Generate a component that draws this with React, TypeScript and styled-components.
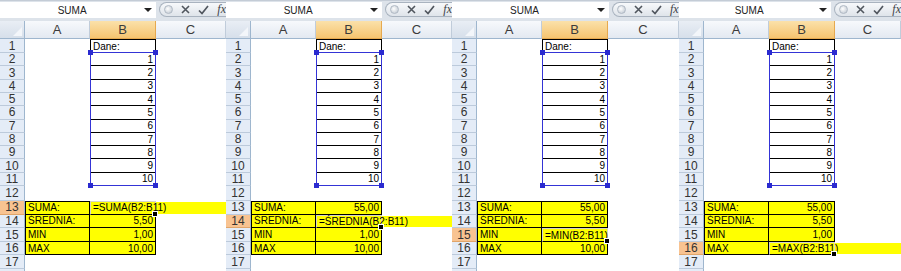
import React from "react";
import styled, { createGlobalStyle, css } from "styled-components";

const GlobalStyle = createGlobalStyle`
  html, body { margin: 0; padding: 0; background: #ffffff; }
  body { font-family: "Liberation Sans", Arial, sans-serif; }
`;

const Strip = styled.div`
  display: flex;
  width: 901px;
  height: 271px;
  overflow: hidden;
`;

const Panel = styled.div<{ $w: number }>`
  flex: 0 0 ${(p) => p.$w}px;
  display: flex;
  flex-direction: column;
  overflow: hidden;
  background: #fff;
`;

const TopBar = styled.div`
  height: 22px;
  box-sizing: border-box;
  display: flex;
  align-items: flex-start;
  padding-top: 1px;
  background: #dde3ea;
  border-top: 1px solid #c4ccd6;
`;

const NameBox = styled.div`
  width: 157px;
  height: 16px;
  background: #fff;
  display: flex;
  align-items: center;
  font-size: 10px;
  color: #222;
`;

const NameText = styled.span`
  flex: 1;
  text-align: center;
`;

const DropArrow = styled.span`
  width: 0;
  height: 0;
  margin-right: 4px;
  border-left: 4px solid transparent;
  border-right: 4px solid transparent;
  border-top: 4px solid #222;
`;

const FxPill = styled.div`
  flex: 1;
  margin-left: 3px;
  height: 15px;
  box-sizing: border-box;
  display: flex;
  align-items: center;
  gap: 8px;
  padding-left: 4px;
  border: 1px solid #a9b3bf;
  border-right: none;
  border-radius: 8px 0 0 8px;
  background: linear-gradient(#f7f9fb, #dfe4ea);
  color: #4a4f56;
`;

const Knob = styled.span`
  width: 7px;
  height: 7px;
  border-radius: 50%;
  background: radial-gradient(circle at 40% 40%, #ffffff, #b9c2cc);
  border: 1px solid #b0b9c4;
`;

const FxGlyph = styled.span`
  font-family: "Liberation Serif", serif;
  font-style: italic;
  font-size: 12px;
  color: #3d4248;
`;

const Sheet = styled.div`
  display: grid;
  grid-template-columns: 25px 65px 66px 1fr;
  grid-template-rows: 18px 14px repeat(10, 13.3px) 15px repeat(6, 13.6px);
  overflow: hidden;
`;

const Corner = styled.div`
  grid-row: 1;
  grid-column: 1;
  background: linear-gradient(#e9eef5, #d6dfea);
  border-right: 1px solid #9eb6ce;
  border-bottom: 1px solid #9eb6ce;
  display: flex;
  align-items: flex-end;
  justify-content: flex-end;
  padding: 0 2px 2px 0;
`;

const CornerTri = styled.span`
  width: 0;
  height: 0;
  border-left: 9px solid transparent;
  border-bottom: 9px solid #f3f6fa;
`;

const ColHead = styled.div<{ $col: number; $on?: boolean }>`
  grid-row: 1;
  grid-column: ${(p) => p.$col};
  display: flex;
  align-items: center;
  justify-content: center;
  font-size: 13px;
  color: #3b3b3b;
  border-right: 1px solid #c0ccda;
  border-bottom: 1px solid #9eb6ce;
  background: linear-gradient(#f7f9fc, #e3e9f1);
  ${(p) =>
    p.$on &&
    css`
      background: linear-gradient(#fbe1aa, #f5c470);
      border-right-color: #e6a94f;
      border-bottom-color: #e6a94f;
    `}
`;

const RowHead = styled.div<{ $row: number; $on?: boolean }>`
  grid-row: ${(p) => p.$row + 1};
  grid-column: 1;
  display: flex;
  align-items: center;
  justify-content: center;
  font-size: 12px;
  line-height: 12px;
  color: #333;
  background: #e4ecf7;
  border-right: 1px solid #9eb6ce;
  border-bottom: 1px solid #bccadb;
  ${(p) =>
    p.$on &&
    css`
      background: #f8c391;
      border-bottom-color: #e0a56a;
    `}
`;

const Cell = styled.div<{
  $row: number;
  $col: number;
  $fill?: string;
  $right?: boolean;
  $top?: boolean;
  $left?: boolean;
  $boxed?: boolean;
}>`
  grid-row: ${(p) => p.$row + 1};
  grid-column: ${(p) => p.$col};
  display: flex;
  align-items: center;
  justify-content: ${(p) => (p.$right ? "flex-end" : "flex-start")};
  padding: 0 2px;
  font-size: 10px;
  line-height: 11px;
  color: #000;
  white-space: nowrap;
  background: ${(p) => p.$fill || "transparent"};
  ${(p) =>
    p.$boxed &&
    css`
      border-right: 1px solid #000;
      border-bottom: 1px solid #000;
    `}
  ${(p) => p.$top && "border-top: 1px solid #000;"}
  ${(p) => p.$left && "border-left: 1px solid #000;"}
`;

const EditCell = styled.div<{ $row: number }>`
  grid-row: ${(p) => p.$row + 1};
  grid-column: 3;
  position: relative;
  z-index: 2;
  display: flex;
  align-items: center;
  padding: 0 2px;
  font-size: 10px;
  line-height: 11px;
  color: #000;
  white-space: nowrap;
  overflow: visible;
  background: #ffff00;
  border: 1px solid #d6d6c8;
  border-bottom-color: #000;
`;

const Spill = styled.div<{ $row: number }>`
  grid-row: ${(p) => p.$row + 1};
  grid-column: 4;
  background: #ffff00;
  margin-top: 1px;
  margin-bottom: 1px;
`;

const FillHandle = styled.span`
  position: absolute;
  right: -3px;
  bottom: -3px;
  width: 4px;
  height: 4px;
  background: #000;
  border: 1px solid #fff;
`;

const Selection = styled.div`
  grid-row: 3 / 13;
  grid-column: 3;
  position: relative;
  z-index: 3;
  margin: -1px 0 0 0;
  border: 1px solid #3434d6;
  pointer-events: none;
`;

const Grip = styled.span<{ $x: "l" | "r"; $y: "t" | "b" }>`
  position: absolute;
  width: 5px;
  height: 5px;
  background: #2a2ad0;
  ${(p) => (p.$x === "l" ? "left: -3px;" : "right: -3px;")}
  ${(p) => (p.$y === "t" ? "top: -3px;" : "bottom: -3px;")}
`;

const XIcon = () => (
  <svg width="9" height="9" viewBox="0 0 9 9">
    <path d="M1 1 L8 8 M8 1 L1 8" stroke="#50565e" strokeWidth="1.6" />
  </svg>
);

const CheckIcon = () => (
  <svg width="11" height="10" viewBox="0 0 11 10">
    <path d="M1 5.5 L4 8.5 L10 1" stroke="#50565e" strokeWidth="1.7" fill="none" />
  </svg>
);

const labels = ["SUMA:", "ŚREDNIA:", "MIN", "MAX"];
const values = ["55,00", "5,50", "1,00", "10,00"];

const panels = [
  { w: 226, edit: 13, formula: "=SUMA(B2:B11)", spill: true },
  { w: 226, edit: 14, formula: "=ŚREDNIA(B2:B11)", spill: true },
  { w: 227, edit: 15, formula: "=MIN(B2:B11)", spill: false },
  { w: 222, edit: 16, formula: "=MAX(B2:B11)", spill: true },
];

type PanelProps = { w: number; edit: number; formula: string; spill: boolean };

const SheetPanel = ({ w, edit, formula, spill }: PanelProps) => {
  const rows = Array.from({ length: 18 }, (_, i) => i + 1);
  return (
    <Panel $w={w}>
      <TopBar>
        <NameBox>
          <NameText>SUMA</NameText>
          <DropArrow />
        </NameBox>
        <FxPill>
          <Knob />
          <XIcon />
          <CheckIcon />
          <FxGlyph>fx</FxGlyph>
        </FxPill>
      </TopBar>
      <Sheet>
        <Corner>
          <CornerTri />
        </Corner>
        <ColHead $col={2}>A</ColHead>
        <ColHead $col={3} $on>
          B
        </ColHead>
        <ColHead $col={4}>C</ColHead>

        {rows.map((r) => (
          <RowHead key={`h${r}`} $row={r} $on={r === edit}>
            {r < 18 ? r : ""}
          </RowHead>
        ))}

        <Cell $row={1} $col={3} $boxed $left $top>
          Dane:
        </Cell>
        {Array.from({ length: 10 }, (_, i) => (
          <Cell key={`n${i}`} $row={i + 2} $col={3} $boxed $left $right>
            {i + 1}
          </Cell>
        ))}

        {labels.map((label, i) => {
          const r = 13 + i;
          return (
            <React.Fragment key={label}>
              <Cell $row={r} $col={2} $fill="#ffff00" $boxed $left $top={i === 0}>
                {label}
              </Cell>
              {r === edit ? (
                <EditCell $row={r}>
                  {formula}
                  <FillHandle />
                </EditCell>
              ) : (
                <Cell $row={r} $col={3} $fill="#ffff00" $boxed $right $top={i === 0}>
                  {values[i]}
                </Cell>
              )}
              {r === edit && spill && <Spill $row={r} />}
            </React.Fragment>
          );
        })}

        <Selection>
          <Grip $x="l" $y="t" />
          <Grip $x="r" $y="t" />
          <Grip $x="l" $y="b" />
          <Grip $x="r" $y="b" />
        </Selection>
      </Sheet>
    </Panel>
  );
};

export default function App() {
  return (
    <>
      <GlobalStyle />
      <Strip>
        {panels.map((p) => (
          <SheetPanel key={p.edit} {...p} />
        ))}
      </Strip>
    </>
  );
}
